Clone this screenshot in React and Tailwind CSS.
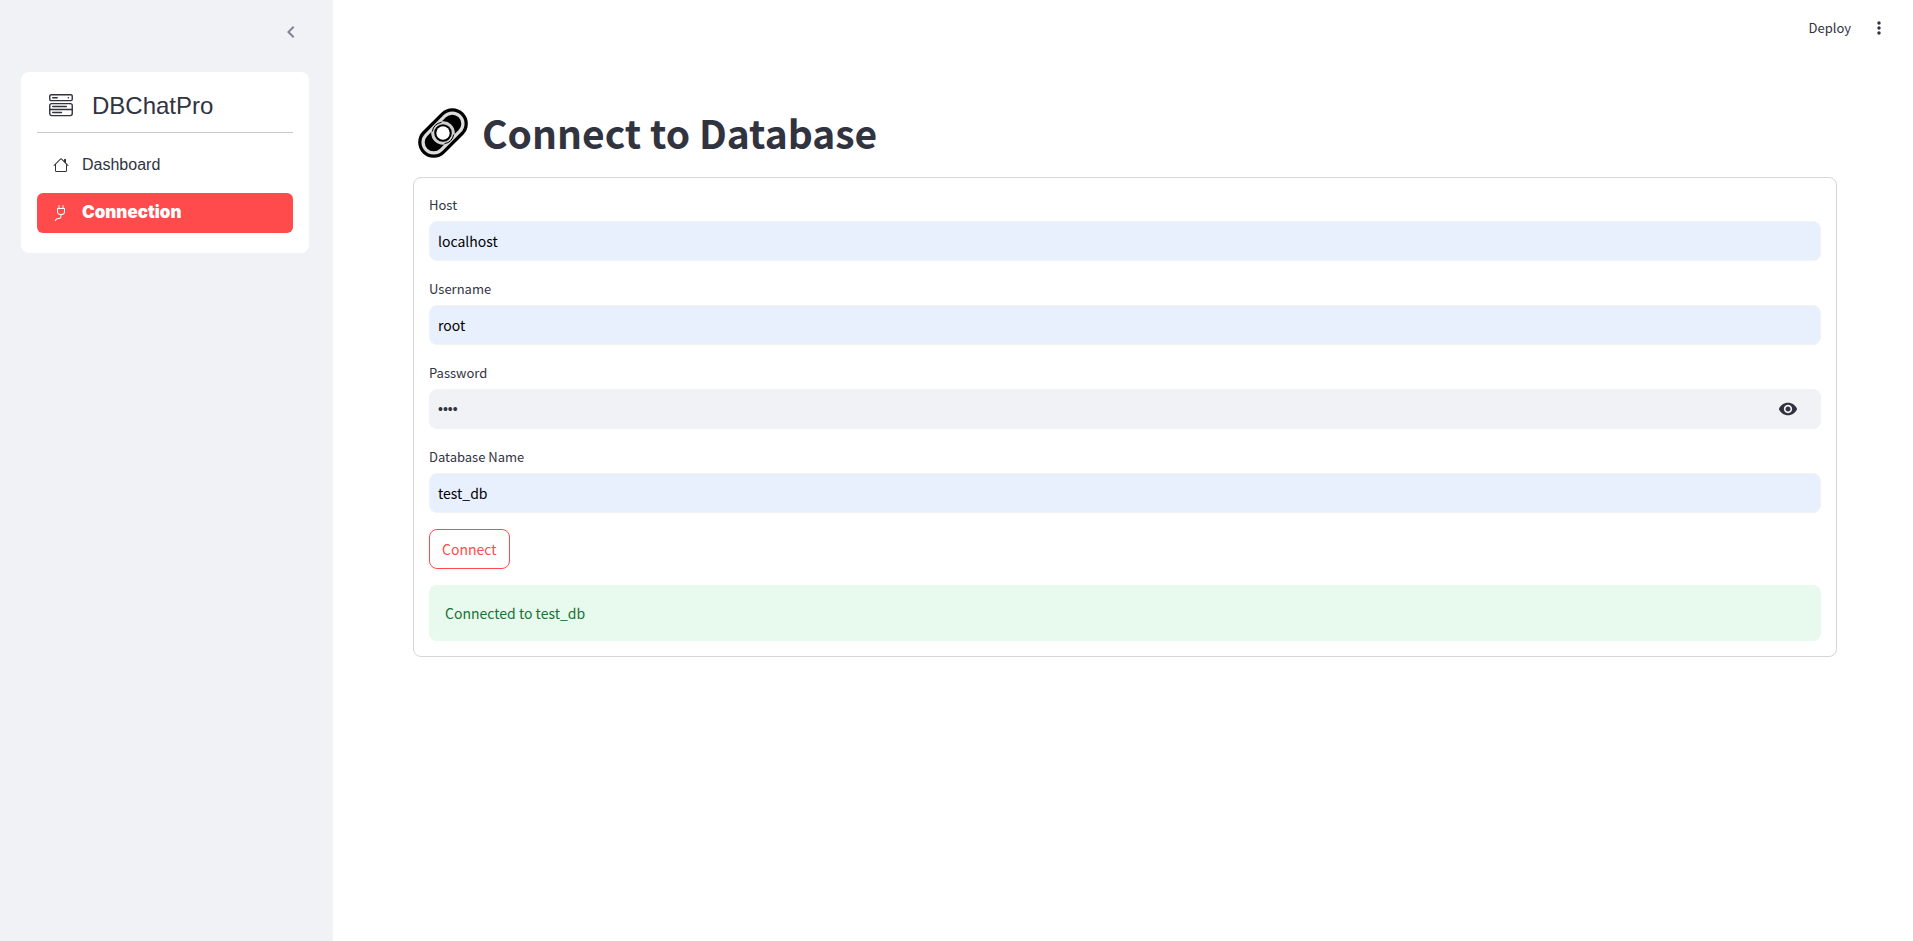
import { useState } from "react";
import { BsHouse, BsPlug } from "react-icons/bs";
import { MdVisibility, MdVisibilityOff, MdMoreVert, MdChevronLeft } from "react-icons/md";

function ServerIcon() {
  return (
    <svg viewBox="0 0 24 24" className="size-6 shrink-0" fill="none" stroke="currentColor" strokeWidth="1.4" strokeLinecap="round" aria-hidden="true">
      <rect x="0.75" y="0.8" width="22.5" height="5.8" rx="1.3" />
      <path d="M3.7 3.7h4.5M19.3 3.7h.2M3.7 12.500h13.600M3.700 18.500h8.800" />
      <rect x="0.75" y="9.600" width="22.5" height="12" rx="2" />
      <path d="M1 15.500h22" />
    </svg>
  );
}

function LinkIcon() {
  return (
    <svg viewBox="0 0 50 50" className="size-[50px] shrink-0" fill="none" aria-hidden="true">
      <path d="M15.7 34.3 34.3 15.7" stroke="#000" strokeWidth="31" strokeLinecap="round" />
      <path d="M15.7 34.3 34.3 15.7" stroke="#dcdcdc" strokeWidth="24.5" strokeLinecap="round" />
      <path d="M15.7 34.3 34.3 15.7" stroke="#000" strokeWidth="18" strokeLinecap="round" />
      <circle cx="25" cy="25" r="10.3" fill="#000" stroke="#d0d0d0" strokeWidth="3" />
      <path d="M35.700 26.500a11.500 11.500 0 0 1-9.200 9.200M14.300 23.500a11.500 11.500 0 0 1 9.200-9.200" stroke="#000" strokeWidth="1" />
      <circle cx="25" cy="25" r="6.7" fill="#fff" />
    </svg>
  );
}

function Field({ id, label, value, children, type = "text", tone = "bg-[#e8f0fe] text-black" }) {
  return (
    <div className="mb-4">
      <label htmlFor={id} className="flex h-7 items-start text-[13px] leading-6">{label}</label>
      <div className={`flex h-10 overflow-hidden rounded-lg border border-[#f0f2f6] ${tone}`}>
        <input
          id={id}
          type={type}
          defaultValue={value}
          className={`min-w-0 flex-1 bg-transparent px-2 text-[14px] outline-none ${type === "password" ? "font-['Liberation_Sans',sans-serif]" : ""}`}
        />
        {children}
      </div>
    </div>
  );
}

export default function App() {
  const [visible, setVisible] = useState(false);
  const Eye = visible ? MdVisibilityOff : MdVisibility;
  return (
    <div className="flex min-h-screen bg-white font-['Noto_Sans_CJK_SC',sans-serif] text-[#31333f]">
      <aside className="w-[333px] shrink-0 bg-[#f0f2f6] pr-6 pl-[21px]">
        <div className="flex h-[72px] justify-end pt-5 pr-[6px]">
          <button type="button" aria-label="Collapse sidebar" className="size-6 text-[#808495]">
            <MdChevronLeft className="size-6" />
          </button>
        </div>
        <nav className="rounded-lg bg-white p-4 pb-5 font-['Liberation_Sans',sans-serif]" aria-label="Main">
          <div className="flex h-[45px] items-center gap-[19px] border-b border-[#c8c9ce] pb-2 pl-3 text-2xl">
            <ServerIcon />
            <span>DBChatPro</span>
          </div>
          <a href="#dashboard" className="mt-3 flex h-10 items-center gap-[13px] rounded-md pl-4 text-base">
            <BsHouse className="size-4" />
            Dashboard
          </a>
          <a href="#connection" aria-current="page" className="mt-2 flex h-10 items-center gap-[13px] rounded-md bg-[#ff4b4b] pl-4 font-['Inter',sans-serif] text-[17px] font-black text-white">
            <BsPlug className="size-4" />
            Connection
          </a>
        </nav>
      </aside>
      <div className="min-w-0 flex-1">
        <header className="flex h-14 items-center justify-end gap-[18px] pr-6 text-[13px]">
          <button type="button">Deploy</button>
          <button type="button" aria-label="Main menu"><MdMoreVert className="size-5" /></button>
        </header>
        <main className="pr-[76px] pl-20">
          <h1 className="flex h-[121px] items-center gap-[14px] pt-8 pl-[5px] text-[39px] font-bold">
            <LinkIcon />
            Connect to Database
          </h1>
          <form className="rounded-lg border border-[#d6d6d9] p-[15px]" onSubmit={(e) => e.preventDefault()}>
            <Field id="host" label="Host" value="localhost" />
            <Field id="username" label="Username" value="root" />
            <Field id="password" label="Password" value="root" type={visible ? "text" : "password"} tone="bg-[#f0f2f6] text-[#31333f]">
              <button type="button" aria-label="Show password" className="mr-[22px]" onClick={() => setVisible(!visible)}>
                <Eye className="size-5" />
              </button>
            </Field>
            <Field id="database" label="Database Name" value="test_db" />
            <button type="submit" className="h-10 rounded-lg border border-[#ff4b4b] px-3 text-[14px] text-[#ff4b4b]">Connect</button>
            <div role="status" className="mt-4 rounded-lg bg-[#e8f9ee] p-4 text-[14px] leading-6 text-[#177233]">Connected to test_db</div>
          </form>
        </main>
      </div>
    </div>
  );
}
